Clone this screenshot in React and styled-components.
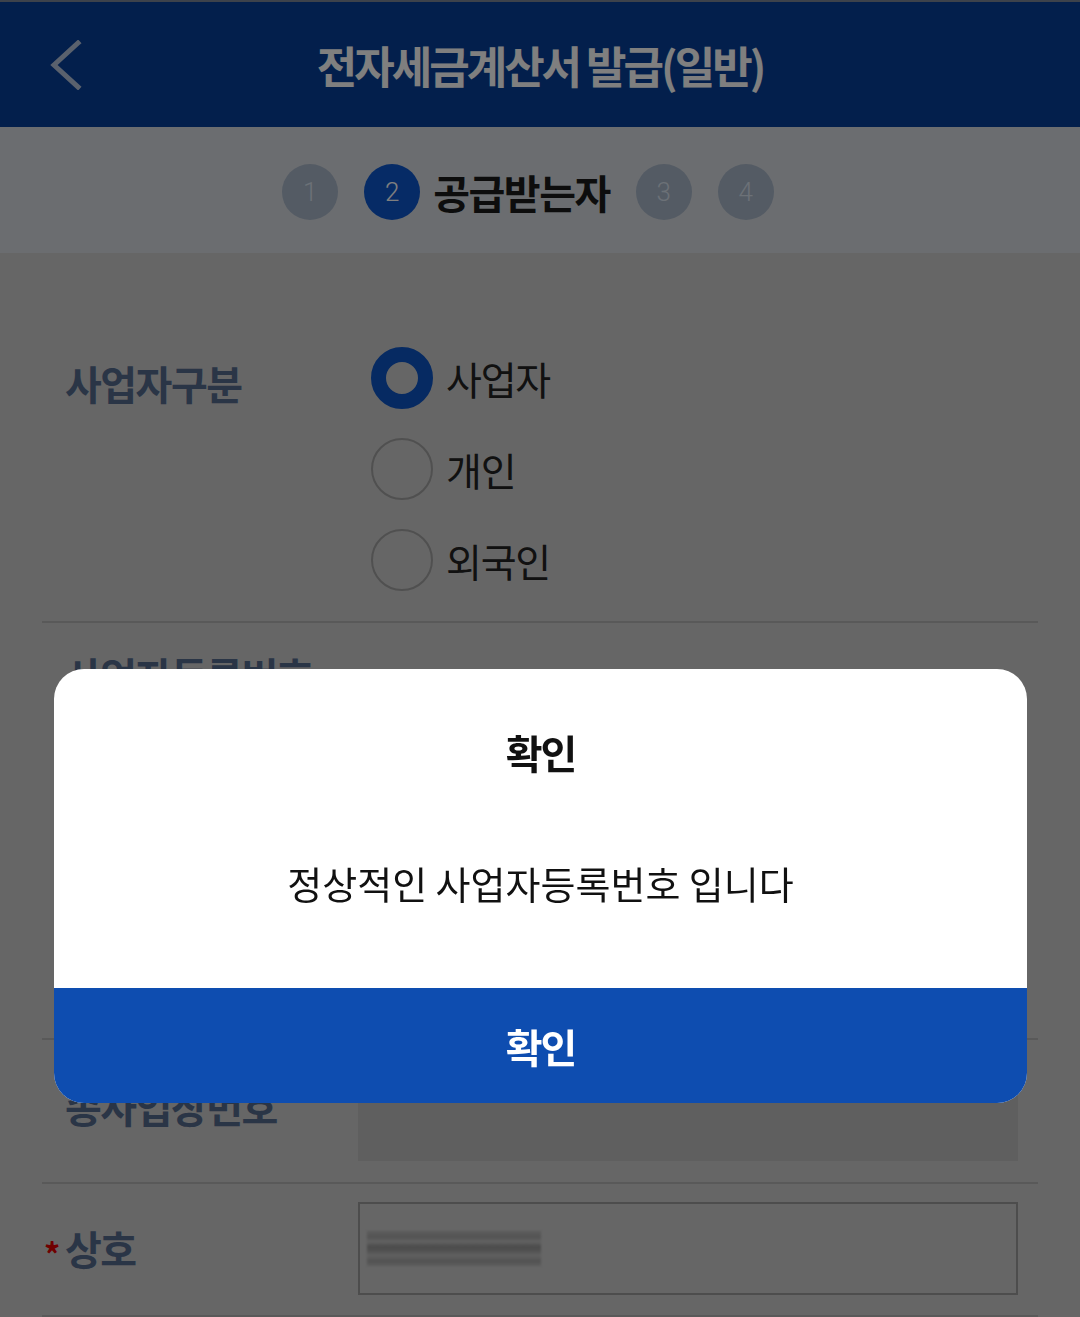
import React from "react";
import styled, { createGlobalStyle } from "styled-components";

const GlobalStyle = createGlobalStyle`
  html, body {
    margin: 0;
    padding: 0;
  }
  body {
    font-family: "Noto Sans CJK KR", "Noto Sans", sans-serif;
    background: #cccccc;
  }
  *, *::before, *::after {
    box-sizing: border-box;
  }
`;

const Page = styled.div`
  min-height: 100vh;
  background: #cccccc;
`;

/* ---------- top bar ---------- */
const Header = styled.header`
  height: 127px;
  background: #063e98;
  border-top: 2px solid #7a8596;
  display: grid;
  grid-template-columns: 130px 1fr 130px;
  align-items: center;
`;

const BackButton = styled.button`
  border: 0;
  background: none;
  padding: 0 0 0 48px;
  height: 100%;
  display: flex;
  align-items: center;
  cursor: pointer;
`;

const Title = styled.h1`
  margin: 0;
  text-align: center;
  color: #ffffff;
  font-size: 44px;
  font-weight: 700;
  letter-spacing: -3px;
  line-height: 1;
`;

/* ---------- step indicator ---------- */
const StepBar = styled.nav`
  height: 126px;
  background: #d6dae0;
  display: flex;
  align-items: center;
  justify-content: center;
  gap: 26px;
  padding: 4px 24px 0 0;
`;

const StepDot = styled.span`
  width: 56px;
  height: 56px;
  border-radius: 50%;
  display: flex;
  align-items: center;
  justify-content: center;
  font-family: Roboto, "Noto Sans", sans-serif;
  font-weight: 300;
  font-size: 26px;
  background: ${(p) => (p.$active ? "#0c56cc" : "#a8b6c8")};
  color: ${(p) => (p.$active ? "#ffffff" : "#d8e2ee")};
`;

const ActiveStep = styled.div`
  display: flex;
  align-items: center;
  gap: 13px;
`;

const StepName = styled.span`
  font-size: 40px;
  font-weight: 700;
  letter-spacing: -1.5px;
  color: #1a1a1a;
  line-height: 1;
`;

/* ---------- form ---------- */
const Form = styled.div`
  padding: 64px 42px 0;
`;

const Row = styled.div`
  display: grid;
  grid-template-columns: 293px 660px;
  align-items: ${(p) => p.$align || "center"};
  padding: ${(p) => p.$pad};
  min-height: ${(p) => p.$minHeight || "auto"};
  border-bottom: 2px solid #b2b2b2;
`;

const Label = styled.div`
  display: flex;
  align-items: center;
  font-size: 40px;
  font-weight: 700;
  letter-spacing: -1.5px;
  line-height: 57px;
  color: #546a8c;
  padding-top: ${(p) => p.$top || "0"};
  margin-top: ${(p) => p.$shift || "0"};
`;

const Required = styled.span`
  color: #e00000;
  font-size: 32px;
  font-weight: 700;
  width: 12px;
  margin-left: -21px;
  margin-right: 9px;
  line-height: 1;
  padding-top: 8px;
`;

const RadioList = styled.div`
  display: flex;
  flex-direction: column;
  gap: 29px;
  padding-left: 13px;
`;

const RadioOption = styled.label`
  display: flex;
  align-items: center;
  gap: 13px;
  cursor: pointer;
`;

const RadioCircle = styled.span`
  width: 62px;
  height: 62px;
  border-radius: 50%;
  border: ${(p) => (p.$checked ? "15px solid #0c54c4" : "2px solid #a0a0a0")};
  background: #cccccc;
`;

const RadioText = styled.span`
  font-size: 39px;
  letter-spacing: -1.2px;
  line-height: 57px;
  color: #222222;
`;

const Field = styled.div`
  display: flex;
  flex-direction: column;
  gap: 20px;
  padding-top: ${(p) => p.$top || "0"};
`;

const InputBox = styled.div`
  height: ${(p) => p.$h || "93px"};
  border: 2px solid #9a9a9a;
  background: #cccccc;
  display: flex;
  align-items: center;
  padding-left: 7px;
`;

const ReadonlyBox = styled.div`
  height: ${(p) => p.$h || "101px"};
  background: #bebebe;
`;

const Masked = styled.div`
  width: 174px;
  height: 35px;
  background: linear-gradient(
    to bottom,
    #b8b8b8 0%,
    #a8a8a8 18%,
    #c4c4c4 30%,
    #969696 46%,
    #a6a6a6 58%,
    #c2c2c2 70%,
    #a4a4a4 86%,
    #bcbcbc 100%
  );
  filter: blur(1px);
`;

const OutlineButton = styled.button`
  height: 93px;
  border: 2px solid #0c54c4;
  background: #ffffff;
  color: #0c54c4;
  font-family: inherit;
  font-size: 36px;
  font-weight: 700;
`;

/* ---------- dialog ---------- */
const Overlay = styled.div`
  position: fixed;
  inset: 0;
  background: rgba(0, 0, 0, 0.5);
  display: flex;
  justify-content: center;
  align-items: flex-start;
  padding-top: 669px;
`;

const Dialog = styled.div`
  width: 973px;
  margin-left: 1px;
  background: #ffffff;
  border-radius: 30px;
  overflow: hidden;
  display: flex;
  flex-direction: column;
`;

const DialogBody = styled.div`
  padding: 55px 40px 77px;
  display: flex;
  flex-direction: column;
  align-items: center;
  gap: 73px;
`;

const DialogTitle = styled.h2`
  margin: 0;
  font-size: 40px;
  font-weight: 700;
  letter-spacing: -2px;
  line-height: 57px;
  color: #111111;
`;

const DialogMessage = styled.p`
  margin: 0;
  font-size: 38px;
  letter-spacing: 0;
  line-height: 57px;
  color: #111111;
`;

const DialogButton = styled.button`
  height: 115px;
  border: 0;
  background: #0e4db0;
  color: #ffffff;
  font-family: inherit;
  font-size: 40px;
  font-weight: 700;
  letter-spacing: -2px;
  cursor: pointer;
`;

function BackIcon() {
  return (
    <svg width="34" height="50" viewBox="0 0 34 50" fill="none">
      <polyline
        points="30,3 6,25 30,47"
        stroke="#b4c2da"
        strokeWidth="5"
        strokeLinecap="square"
        strokeLinejoin="miter"
      />
    </svg>
  );
}

const kinds = ["사업자", "개인", "외국인"];

export default function App() {
  return (
    <Page>
      <GlobalStyle />
      <Header>
        <BackButton aria-label="뒤로">
          <BackIcon />
        </BackButton>
        <Title>전자세금계산서 발급(일반)</Title>
        <span />
      </Header>

      <StepBar>
        <StepDot>1</StepDot>
        <ActiveStep>
          <StepDot $active>2</StepDot>
          <StepName>공급받는자</StepName>
        </ActiveStep>
        <StepDot>3</StepDot>
        <StepDot>4</StepDot>
      </StepBar>

      <Form>
        <Row $align="start" $pad="30px 20px 30px 23px">
          <Label $top="8px">사업자구분</Label>
          <RadioList>
            {kinds.map((k, i) => (
              <RadioOption key={k}>
                <RadioCircle $checked={i === 0} />
                <RadioText>{k}</RadioText>
              </RadioOption>
            ))}
          </RadioList>
        </Row>

        <Row $align="start" $pad="24px 20px 0 23px" $minHeight="417px">
          <Label>사업자등록번호</Label>
          <Field $top="60px">
            <InputBox />
            <OutlineButton>사업자등록번호 확인</OutlineButton>
          </Field>
        </Row>

        <Row $pad="20px 20px 21px 23px">
          <Label $shift="-8px">종사업장번호</Label>
          <ReadonlyBox />
        </Row>

        <Row $pad="18px 20px 20px 23px">
          <Label>
            <Required>*</Required>상호
          </Label>
          <InputBox>
            <Masked />
          </InputBox>
        </Row>
      </Form>

      <Overlay>
        <Dialog role="dialog">
          <DialogBody>
            <DialogTitle>확인</DialogTitle>
            <DialogMessage>정상적인 사업자등록번호 입니다</DialogMessage>
          </DialogBody>
          <DialogButton>확인</DialogButton>
        </Dialog>
      </Overlay>
    </Page>
  );
}
